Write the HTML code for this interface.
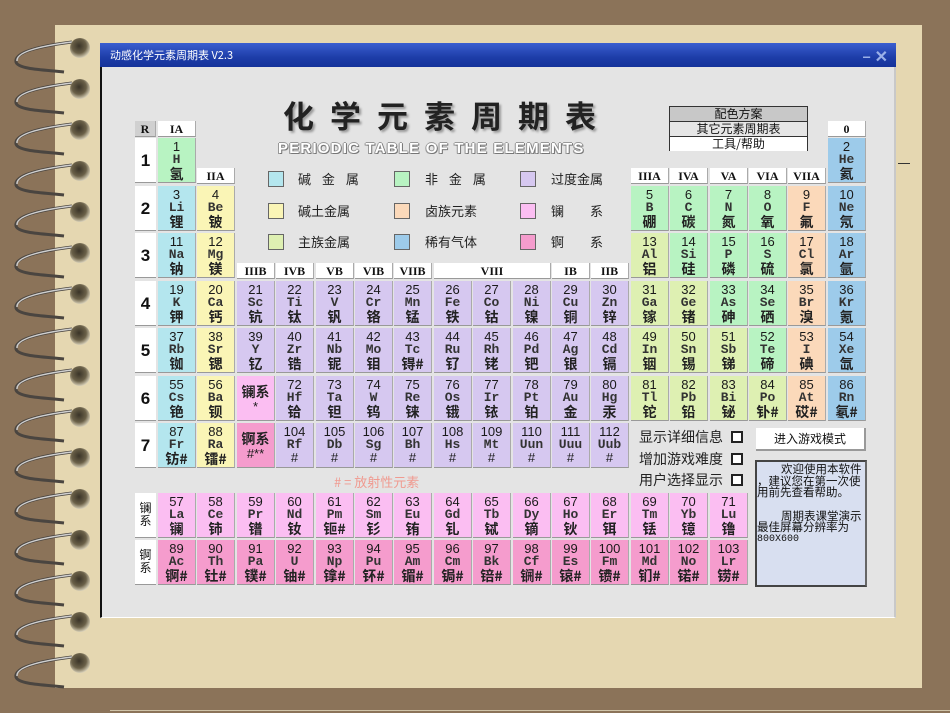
<!DOCTYPE html>
<html><head><meta charset="utf-8">
<style>
*{margin:0;padding:0;box-sizing:border-box}
body{width:950px;height:713px;overflow:hidden;background:#8b7359;position:relative;font-family:"Liberation Sans","Noto Sans CJK SC",sans-serif}
.paper{position:absolute;left:55px;top:25px;width:867px;height:663px;background:#e5d7b1}
.win{position:absolute;left:100px;top:43px;width:796px;height:575px;background:#e4e4e4;border-left:2px solid #111;border-right:2px solid #c8c8c8;border-bottom:1px solid #fff}
.tb{position:absolute;left:100px;top:43px;width:796px;height:24px;background:linear-gradient(#3a5ed0,#1d3da8 60%,#15329a);color:#fff;font-size:11px;line-height:24px;padding-left:10px;font-family:"Noto Sans CJK SC",sans-serif}
.tb span{position:absolute;right:8px;top:0;font-size:16px;color:#9ab0e8;font-weight:bold}
.e{position:absolute;width:38px;height:45px;text-align:center;font-size:13px;line-height:14px;padding-top:2px;color:#1a1a1a;border-right:1px solid #aaa;border-bottom:1px solid #999}
.e i{display:block;font-style:normal;font-family:"Liberation Mono",monospace;font-size:13px;line-height:12px;font-weight:bold;color:#333}
.e b{display:block;font-weight:bold;font-family:"Noto Sans CJK SC",sans-serif;font-size:14px;line-height:16px;color:#222}
.a{background:#b4e6ee}.bb{background:#faf5b6}.t{background:#d6c8f0}.n{background:#b8f3c2}.h{background:#fbd9ba}.g{background:#9dcbea}.m{background:#def0b2}.l{background:#fbbef2}.ac{background:#f59ccd}
.hd{position:absolute;height:16px;background:#fff;text-align:center;font-family:"Liberation Serif",serif;font-weight:bold;font-size:12px;line-height:16px;color:#111;border-right:1px solid #aaa;border-bottom:1px solid #999}
.p{position:absolute;left:135px;width:21px;height:45px;background:#fff;text-align:center;font-weight:bold;font-size:17px;line-height:45px;color:#111;border-bottom:1px solid #999}
.lg{position:absolute;width:16px;height:16px;border:1px solid #666}
.lt{position:absolute;font-size:13px;color:#222;font-family:"Noto Sans CJK SC",sans-serif;line-height:16px}
.cb{position:absolute;font-size:14px;color:#222;font-family:"Noto Sans CJK SC",sans-serif;line-height:18px}
.cb s{position:absolute;left:92px;top:3px;width:12px;height:12px;border:2px solid #222;background:#fff;text-decoration:none}
</style></head><body>
<div class="paper"></div>
<svg style="position:absolute;left:0;top:0" width="110" height="713">
<defs><radialGradient id="bl" cx="45%" cy="40%" r="60%"><stop offset="0" stop-color="#3a3428"/><stop offset="0.6" stop-color="#6a6048"/><stop offset="1" stop-color="#d8d0b8"/></radialGradient></defs>
<g id="r">
<path d="M72 42 C40 46 14 52 16 62 C18 70 50 70 64 72" fill="none" stroke="#4a4540" stroke-width="3"/>
<path d="M72 42 C40 46 16 52 17 61" fill="none" stroke="#cfcfcf" stroke-width="1.5"/>
<circle cx="80" cy="48" r="10" fill="url(#bl)"/>
</g>
<use href="#r" y="41"/><use href="#r" y="82"/><use href="#r" y="123"/><use href="#r" y="164"/><use href="#r" y="205"/><use href="#r" y="246"/><use href="#r" y="287"/><use href="#r" y="328"/><use href="#r" y="369"/><use href="#r" y="410"/><use href="#r" y="451"/><use href="#r" y="492"/><use href="#r" y="533"/><use href="#r" y="574"/><use href="#r" y="615"/>
</svg>
<div style="position:absolute;left:110px;top:710px;width:840px;height:1px;background:#cfc3a8"></div>
<div style="position:absolute;left:898px;top:163px;width:12px;height:1px;background:#333"></div>
<div class="win"></div>
<div class="tb">动感化学元素周期表 V2.3<span>– ✕</span></div>

<div style="position:absolute;left:283px;top:96px;font-size:31px;font-weight:bold;letter-spacing:16px;color:#222;font-family:'Noto Sans CJK SC',sans-serif;text-shadow:2px 2px 2px #999;line-height:38px">化学元素周期表</div>
<div style="position:absolute;left:278px;top:140px;font-size:15px;font-weight:bold;color:#fff;letter-spacing:1.2px;text-shadow:1px 1px 0 #777,-1px 0 0 #999,0 -1px 0 #999,1px 0 0 #888,-1px 1px 0 #999">PERIODIC TABLE OF THE ELEMENTS</div>

<div style="position:absolute;left:669px;top:106px;width:139px;height:45px;border:1px solid #333;font-size:12px;font-family:'Noto Sans CJK SC',sans-serif;text-align:center;line-height:14px;color:#111">
<div style="background:#c8c8c8;border-bottom:1px solid #333">配色方案</div>
<div style="background:#e6e6e6;border-bottom:1px solid #333">其它元素周期表</div>
<div style="background:#fff">工具/帮助</div></div>

<div class="lg" style="left:268px;top:171px;background:#b4e6ee"></div><div class="lt" style="left:298px;top:171px;letter-spacing:4px">碱 金 属</div>
<div class="lg" style="left:268px;top:203px;background:#faf5b6"></div><div class="lt" style="left:298px;top:203px">碱土金属</div>
<div class="lg" style="left:268px;top:234px;background:#def0b2"></div><div class="lt" style="left:298px;top:234px">主族金属</div>
<div class="lg" style="left:394px;top:171px;background:#b8f3c2"></div><div class="lt" style="left:425px;top:171px;letter-spacing:4px">非 金 属</div>
<div class="lg" style="left:394px;top:203px;background:#fbd9ba"></div><div class="lt" style="left:425px;top:203px">卤族元素</div>
<div class="lg" style="left:394px;top:234px;background:#9dcbea"></div><div class="lt" style="left:425px;top:234px">稀有气体</div>
<div class="lg" style="left:520px;top:171px;background:#d6c8f0"></div><div class="lt" style="left:551px;top:171px">过度金属</div>
<div class="lg" style="left:520px;top:203px;background:#fbbef2"></div><div class="lt" style="left:551px;top:203px;letter-spacing:26px">镧系</div>
<div class="lg" style="left:520px;top:234px;background:#f59ccd"></div><div class="lt" style="left:551px;top:234px;letter-spacing:26px">锕系</div>

<div class="hd" style="left:135px;top:121px;width:21px;background:#d0d0d0">R</div>
<div class="hd" style="left:158px;top:121px;width:38px">IA</div>
<div class="hd" style="left:197px;top:168px;width:38px">IIA</div>
<div class="hd" style="left:237px;top:263px;width:38px">IIIB</div>
<div class="hd" style="left:276px;top:263px;width:38px">IVB</div>
<div class="hd" style="left:316px;top:263px;width:38px">VB</div>
<div class="hd" style="left:355px;top:263px;width:38px">VIB</div>
<div class="hd" style="left:394px;top:263px;width:38px">VIIB</div>
<div class="hd" style="left:434px;top:263px;width:117px">VIII</div>
<div class="hd" style="left:552px;top:263px;width:38px">IB</div>
<div class="hd" style="left:591px;top:263px;width:38px">IIB</div>
<div class="hd" style="left:631px;top:168px;width:38px">IIIA</div>
<div class="hd" style="left:670px;top:168px;width:38px">IVA</div>
<div class="hd" style="left:710px;top:168px;width:38px">VA</div>
<div class="hd" style="left:749px;top:168px;width:38px">VIA</div>
<div class="hd" style="left:788px;top:168px;width:38px">VIIA</div>
<div class="hd" style="left:828px;top:121px;width:38px">0</div>

<div class="p" style="top:138px">1</div><div class="p" style="top:186px">2</div><div class="p" style="top:233px">3</div><div class="p" style="top:281px">4</div><div class="p" style="top:328px">5</div><div class="p" style="top:376px">6</div><div class="p" style="top:423px">7</div>

<div class="e n" style="left:158px;top:138px">1<i>H</i><b>氢</b></div>
<div class="e g" style="left:828px;top:138px">2<i>He</i><b>氦</b></div>
<div class="e a" style="left:158px;top:186px">3<i>Li</i><b>锂</b></div>
<div class="e bb" style="left:197px;top:186px">4<i>Be</i><b>铍</b></div>
<div class="e n" style="left:631px;top:186px">5<i>B</i><b>硼</b></div>
<div class="e n" style="left:670px;top:186px">6<i>C</i><b>碳</b></div>
<div class="e n" style="left:710px;top:186px">7<i>N</i><b>氮</b></div>
<div class="e n" style="left:749px;top:186px">8<i>O</i><b>氧</b></div>
<div class="e h" style="left:788px;top:186px">9<i>F</i><b>氟</b></div>
<div class="e g" style="left:828px;top:186px">10<i>Ne</i><b>氖</b></div>
<div class="e a" style="left:158px;top:233px">11<i>Na</i><b>钠</b></div>
<div class="e bb" style="left:197px;top:233px">12<i>Mg</i><b>镁</b></div>
<div class="e m" style="left:631px;top:233px">13<i>Al</i><b>铝</b></div>
<div class="e n" style="left:670px;top:233px">14<i>Si</i><b>硅</b></div>
<div class="e n" style="left:710px;top:233px">15<i>P</i><b>磷</b></div>
<div class="e n" style="left:749px;top:233px">16<i>S</i><b>硫</b></div>
<div class="e h" style="left:788px;top:233px">17<i>Cl</i><b>氯</b></div>
<div class="e g" style="left:828px;top:233px">18<i>Ar</i><b>氩</b></div>
<div class="e a" style="left:158px;top:281px">19<i>K</i><b>钾</b></div>
<div class="e bb" style="left:197px;top:281px">20<i>Ca</i><b>钙</b></div>
<div class="e t" style="left:237px;top:281px">21<i>Sc</i><b>钪</b></div>
<div class="e t" style="left:276px;top:281px">22<i>Ti</i><b>钛</b></div>
<div class="e t" style="left:316px;top:281px">23<i>V</i><b>钒</b></div>
<div class="e t" style="left:355px;top:281px">24<i>Cr</i><b>铬</b></div>
<div class="e t" style="left:394px;top:281px">25<i>Mn</i><b>锰</b></div>
<div class="e t" style="left:434px;top:281px">26<i>Fe</i><b>铁</b></div>
<div class="e t" style="left:473px;top:281px">27<i>Co</i><b>钴</b></div>
<div class="e t" style="left:513px;top:281px">28<i>Ni</i><b>镍</b></div>
<div class="e t" style="left:552px;top:281px">29<i>Cu</i><b>铜</b></div>
<div class="e t" style="left:591px;top:281px">30<i>Zn</i><b>锌</b></div>
<div class="e m" style="left:631px;top:281px">31<i>Ga</i><b>镓</b></div>
<div class="e m" style="left:670px;top:281px">32<i>Ge</i><b>锗</b></div>
<div class="e n" style="left:710px;top:281px">33<i>As</i><b>砷</b></div>
<div class="e n" style="left:749px;top:281px">34<i>Se</i><b>硒</b></div>
<div class="e h" style="left:788px;top:281px">35<i>Br</i><b>溴</b></div>
<div class="e g" style="left:828px;top:281px">36<i>Kr</i><b>氪</b></div>
<div class="e a" style="left:158px;top:328px">37<i>Rb</i><b>铷</b></div>
<div class="e bb" style="left:197px;top:328px">38<i>Sr</i><b>锶</b></div>
<div class="e t" style="left:237px;top:328px">39<i>Y</i><b>钇</b></div>
<div class="e t" style="left:276px;top:328px">40<i>Zr</i><b>锆</b></div>
<div class="e t" style="left:316px;top:328px">41<i>Nb</i><b>铌</b></div>
<div class="e t" style="left:355px;top:328px">42<i>Mo</i><b>钼</b></div>
<div class="e t" style="left:394px;top:328px">43<i>Tc</i><b>锝#</b></div>
<div class="e t" style="left:434px;top:328px">44<i>Ru</i><b>钌</b></div>
<div class="e t" style="left:473px;top:328px">45<i>Rh</i><b>铑</b></div>
<div class="e t" style="left:513px;top:328px">46<i>Pd</i><b>钯</b></div>
<div class="e t" style="left:552px;top:328px">47<i>Ag</i><b>银</b></div>
<div class="e t" style="left:591px;top:328px">48<i>Cd</i><b>镉</b></div>
<div class="e m" style="left:631px;top:328px">49<i>In</i><b>铟</b></div>
<div class="e m" style="left:670px;top:328px">50<i>Sn</i><b>锡</b></div>
<div class="e m" style="left:710px;top:328px">51<i>Sb</i><b>锑</b></div>
<div class="e n" style="left:749px;top:328px">52<i>Te</i><b>碲</b></div>
<div class="e h" style="left:788px;top:328px">53<i>I</i><b>碘</b></div>
<div class="e g" style="left:828px;top:328px">54<i>Xe</i><b>氙</b></div>
<div class="e a" style="left:158px;top:376px">55<i>Cs</i><b>铯</b></div>
<div class="e bb" style="left:197px;top:376px">56<i>Ba</i><b>钡</b></div>
<div class="e l" style="left:237px;top:376px;padding-top:8px"><b>镧系</b>*</div>
<div class="e t" style="left:276px;top:376px">72<i>Hf</i><b>铪</b></div>
<div class="e t" style="left:316px;top:376px">73<i>Ta</i><b>钽</b></div>
<div class="e t" style="left:355px;top:376px">74<i>W</i><b>钨</b></div>
<div class="e t" style="left:394px;top:376px">75<i>Re</i><b>铼</b></div>
<div class="e t" style="left:434px;top:376px">76<i>Os</i><b>锇</b></div>
<div class="e t" style="left:473px;top:376px">77<i>Ir</i><b>铱</b></div>
<div class="e t" style="left:513px;top:376px">78<i>Pt</i><b>铂</b></div>
<div class="e t" style="left:552px;top:376px">79<i>Au</i><b>金</b></div>
<div class="e t" style="left:591px;top:376px">80<i>Hg</i><b>汞</b></div>
<div class="e m" style="left:631px;top:376px">81<i>Tl</i><b>铊</b></div>
<div class="e m" style="left:670px;top:376px">82<i>Pb</i><b>铅</b></div>
<div class="e m" style="left:710px;top:376px">83<i>Bi</i><b>铋</b></div>
<div class="e m" style="left:749px;top:376px">84<i>Po</i><b>钋#</b></div>
<div class="e h" style="left:788px;top:376px">85<i>At</i><b>砹#</b></div>
<div class="e g" style="left:828px;top:376px">86<i>Rn</i><b>氡#</b></div>
<div class="e a" style="left:158px;top:423px">87<i>Fr</i><b>钫#</b></div>
<div class="e bb" style="left:197px;top:423px">88<i>Ra</i><b>镭#</b></div>
<div class="e ac" style="left:237px;top:423px;padding-top:8px"><b>锕系</b>#**</div>
<div class="e t" style="left:276px;top:423px">104<i>Rf</i>#</div>
<div class="e t" style="left:316px;top:423px">105<i>Db</i>#</div>
<div class="e t" style="left:355px;top:423px">106<i>Sg</i>#</div>
<div class="e t" style="left:394px;top:423px">107<i>Bh</i>#</div>
<div class="e t" style="left:434px;top:423px">108<i>Hs</i>#</div>
<div class="e t" style="left:473px;top:423px">109<i>Mt</i>#</div>
<div class="e t" style="left:513px;top:423px">110<i>Uun</i>#</div>
<div class="e t" style="left:552px;top:423px">111<i>Uuu</i>#</div>
<div class="e t" style="left:591px;top:423px">112<i>Uub</i>#</div>

<div style="position:absolute;left:334px;top:472px;font-size:13px;color:#f09a90;font-family:'Noto Sans CJK SC',sans-serif">#&nbsp;=&nbsp;放射性元素</div>

<div class="p" style="top:493px;font-size:12px;line-height:13px;padding-top:8px;font-weight:normal;font-family:'Noto Sans CJK SC',sans-serif">镧<br>系</div>
<div class="p" style="top:540px;font-size:12px;line-height:13px;padding-top:8px;font-weight:normal;font-family:'Noto Sans CJK SC',sans-serif">锕<br>系</div>
<div class="e l" style="left:158px;top:493px">57<i>La</i><b>镧</b></div>
<div class="e l" style="left:197px;top:493px">58<i>Ce</i><b>铈</b></div>
<div class="e l" style="left:237px;top:493px">59<i>Pr</i><b>镨</b></div>
<div class="e l" style="left:276px;top:493px">60<i>Nd</i><b>钕</b></div>
<div class="e l" style="left:316px;top:493px">61<i>Pm</i><b>钷#</b></div>
<div class="e l" style="left:355px;top:493px">62<i>Sm</i><b>钐</b></div>
<div class="e l" style="left:394px;top:493px">63<i>Eu</i><b>铕</b></div>
<div class="e l" style="left:434px;top:493px">64<i>Gd</i><b>钆</b></div>
<div class="e l" style="left:473px;top:493px">65<i>Tb</i><b>铽</b></div>
<div class="e l" style="left:513px;top:493px">66<i>Dy</i><b>镝</b></div>
<div class="e l" style="left:552px;top:493px">67<i>Ho</i><b>钬</b></div>
<div class="e l" style="left:591px;top:493px">68<i>Er</i><b>铒</b></div>
<div class="e l" style="left:631px;top:493px">69<i>Tm</i><b>铥</b></div>
<div class="e l" style="left:670px;top:493px">70<i>Yb</i><b>镱</b></div>
<div class="e l" style="left:710px;top:493px">71<i>Lu</i><b>镥</b></div>
<div class="e ac" style="left:158px;top:540px">89<i>Ac</i><b>锕#</b></div>
<div class="e ac" style="left:197px;top:540px">90<i>Th</i><b>钍#</b></div>
<div class="e ac" style="left:237px;top:540px">91<i>Pa</i><b>镤#</b></div>
<div class="e ac" style="left:276px;top:540px">92<i>U</i><b>铀#</b></div>
<div class="e ac" style="left:316px;top:540px">93<i>Np</i><b>镎#</b></div>
<div class="e ac" style="left:355px;top:540px">94<i>Pu</i><b>钚#</b></div>
<div class="e ac" style="left:394px;top:540px">95<i>Am</i><b>镅#</b></div>
<div class="e ac" style="left:434px;top:540px">96<i>Cm</i><b>锔#</b></div>
<div class="e ac" style="left:473px;top:540px">97<i>Bk</i><b>锫#</b></div>
<div class="e ac" style="left:513px;top:540px">98<i>Cf</i><b>锎#</b></div>
<div class="e ac" style="left:552px;top:540px">99<i>Es</i><b>锿#</b></div>
<div class="e ac" style="left:591px;top:540px">100<i>Fm</i><b>镄#</b></div>
<div class="e ac" style="left:631px;top:540px">101<i>Md</i><b>钔#</b></div>
<div class="e ac" style="left:670px;top:540px">102<i>No</i><b>锘#</b></div>
<div class="e ac" style="left:710px;top:540px">103<i>Lr</i><b>铹#</b></div>

<div class="cb" style="left:639px;top:428px">显示详细信息<s></s></div>
<div class="cb" style="left:639px;top:450px">增加游戏难度<s></s></div>
<div class="cb" style="left:639px;top:471px">用户选择显示<s></s></div>
<div style="position:absolute;left:756px;top:428px;width:110px;height:23px;background:#fff;border-right:2px solid #999;border-bottom:2px solid #999;text-align:center;font-size:12px;line-height:22px;font-family:'Noto Sans CJK SC',sans-serif;color:#111">进入游戏模式</div>
<div style="position:absolute;left:755px;top:460px;width:112px;height:127px;background:#d8dff0;border:2px solid #444;border-right-color:#666;font-size:11.5px;line-height:11.5px;font-family:'Noto Sans CJK SC',sans-serif;color:#111;padding-top:2px;overflow:hidden">
<div style="padding-left:24px">欢迎使用本软件</div>
<div>，建议您在第一次使</div>
<div>用前先查看帮助。</div>
<div style="height:12px"></div>
<div style="padding-left:24px">周期表课堂演示</div>
<div>最佳屏幕分辨率为</div>
<div style="font-family:'Liberation Mono',monospace;font-size:10px">800X600</div>
</div>
</body></html>
